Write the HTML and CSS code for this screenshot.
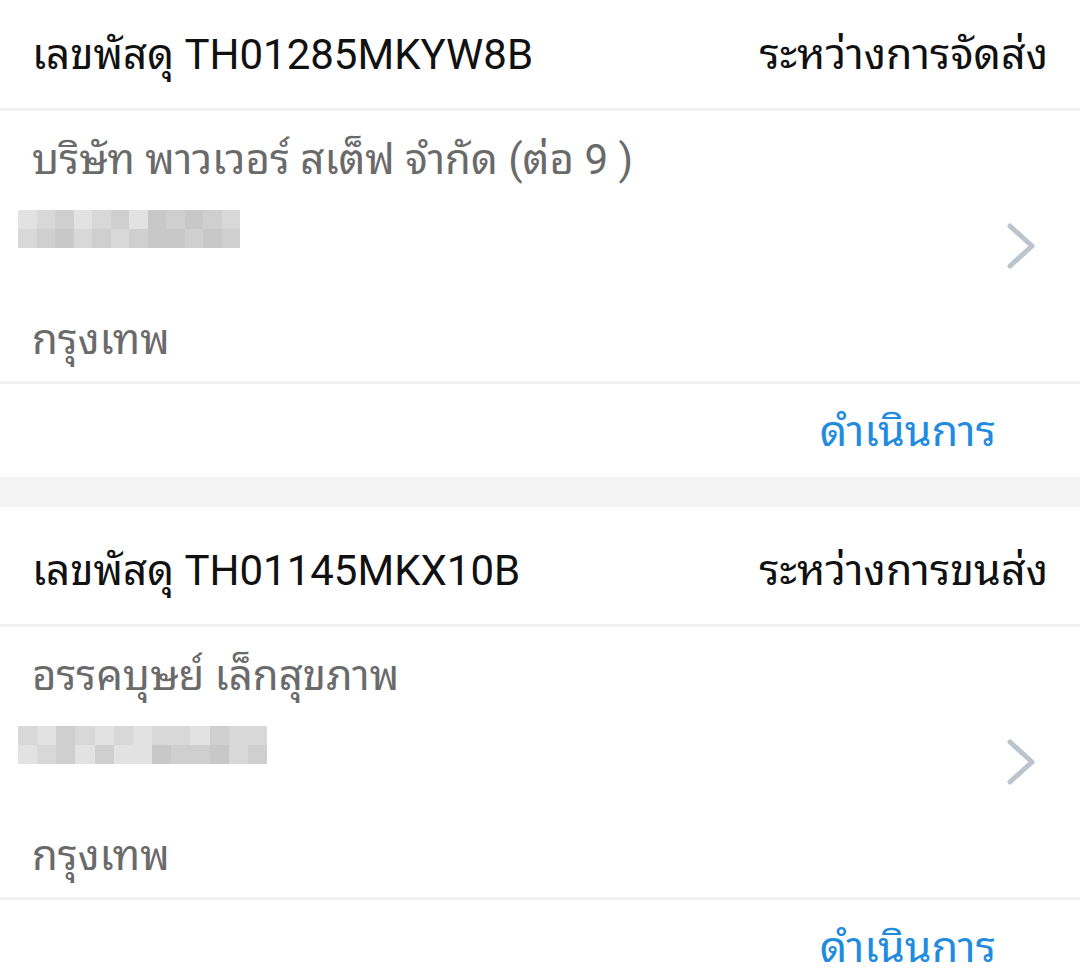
FILE: index.html
```html
<!DOCTYPE html>
<html lang="th">
<head>
<meta charset="utf-8">
<link rel="stylesheet" href="styles.css">
</head>
<body>
<div class="list">
  <section class="card first">
    <div class="head">
      <span class="code">เลขพัสดุ TH01285MKYW8B</span>
      <span class="status">ระหว่างการจัดส่ง</span>
    </div>
    <div class="body">
      <div class="info">
        <div class="name">บริษัท พาวเวอร์ สเต็ฟ จำกัด (ต่อ 9 )</div>
        <div class="mosaic">
          <div class="row"><i class="a"></i><i class="b"></i><i class="c"></i><i class="a"></i><i class="b"></i><i class="c"></i><i class="a"></i><i class="d"></i><i class="c"></i><i class="d"></i><i class="c"></i><i class="b"></i></div>
          <div class="row"><i class="b"></i><i class="c"></i><i class="d"></i><i class="b"></i><i class="c"></i><i class="b"></i><i class="c"></i><i class="d"></i><i class="d"></i><i class="c"></i><i class="d"></i><i class="c"></i></div>
        </div>
        <div class="city">กรุงเทพ</div>
      </div>
      <svg class="chev" viewBox="0 0 30 48" width="30" height="48"><path d="M4 4 L26 24 L4 44" fill="none" stroke="#bcc5cd" stroke-width="5" stroke-linecap="round" stroke-linejoin="round"/></svg>
    </div>
    <div class="foot"><span class="action">ดำเนินการ</span></div>
  </section>
  <section class="card">
    <div class="head">
      <span class="code">เลขพัสดุ TH01145MKX10B</span>
      <span class="status">ระหว่างการขนส่ง</span>
    </div>
    <div class="body">
      <div class="info">
        <div class="name">อรรคบุษย์ เล็กสุขภาพ</div>
        <div class="mosaic wide">
          <div class="row"><i class="b"></i><i class="a"></i><i class="c"></i><i class="b"></i><i class="a"></i><i class="b"></i><i class="a"></i><i class="b"></i><i class="b"></i><i class="a"></i><i class="c"></i><i class="b"></i><i class="b"></i></div>
          <div class="row"><i class="a"></i><i class="b"></i><i class="c"></i><i class="a"></i><i class="c"></i><i class="a"></i><i class="a"></i><i class="d"></i><i class="c"></i><i class="c"></i><i class="d"></i><i class="b"></i><i class="c"></i></div>
        </div>
        <div class="city">กรุงเทพ</div>
      </div>
      <svg class="chev" viewBox="0 0 30 48" width="30" height="48"><path d="M4 4 L26 24 L4 44" fill="none" stroke="#bcc5cd" stroke-width="5" stroke-linecap="round" stroke-linejoin="round"/></svg>
    </div>
    <div class="foot"><span class="action">ดำเนินการ</span></div>
  </section>
</div>
</body>
</html>
```
FILE: styles.css
```css
html, body {
  margin: 0;
  padding: 0;
  background: #ffffff;
}
body {
  font-family: Roboto, "Noto Sans Thai Looped", "Noto Sans Thai", "Noto Sans", "DejaVu Sans", sans-serif;
  overflow: hidden;
  height: 975px;
}
.list {
  display: flex;
  flex-direction: column;
  gap: 30px;
  background: #f3f3f3;
  margin-top: -9px;
}
.card {
  background: #ffffff;
  display: flex;
  flex-direction: column;
}
.head {
  height: 117px;
  display: flex;
  align-items: center;
  justify-content: space-between;
  padding: 0 32px;
  border-bottom: 3px solid #f2f2f2;
  font-size: 42px;
  color: #111111;
}
.status {
  font-size: 43px;
}
.body {
  height: 270px;
  display: flex;
  align-items: center;
  padding: 0 44px 0 32px;
  border-bottom: 3px solid #f2f2f2;
}
.info {
  flex: 1;
  display: flex;
  flex-direction: column;
  height: 100%;
}
.name {
  font-size: 42px;
  color: #6a6a6a;
  margin-top: 24px;
  line-height: 50px;
}
.mosaic {
  margin-top: 25px;
  margin-left: -14px;
  width: 222px;
  display: flex;
  flex-direction: column;
  filter: blur(0.6px);
}
.mosaic.wide {
  width: 249px;
}
.row {
  display: flex;
  height: 19px;
}
.row i {
  flex: 1;
  display: block;
}
.row i.a { background: #e2e2e2; }
.row i.b { background: #d8d8d8; }
.row i.c { background: #cfcfcf; }
.row i.d { background: #c8c8c8; }
.city {
  margin-top: auto;
  margin-bottom: 16px;
  font-size: 42px;
  color: #6a6a6a;
  line-height: 50px;
}
.chev {
  flex: none;
}
.foot {
  height: 93px;
  box-sizing: border-box;
  display: flex;
  align-items: center;
  justify-content: flex-end;
  padding: 0 84px 8px 32px;
}
.action {
  font-size: 43px;
  color: #1f8ce0;
}
```
